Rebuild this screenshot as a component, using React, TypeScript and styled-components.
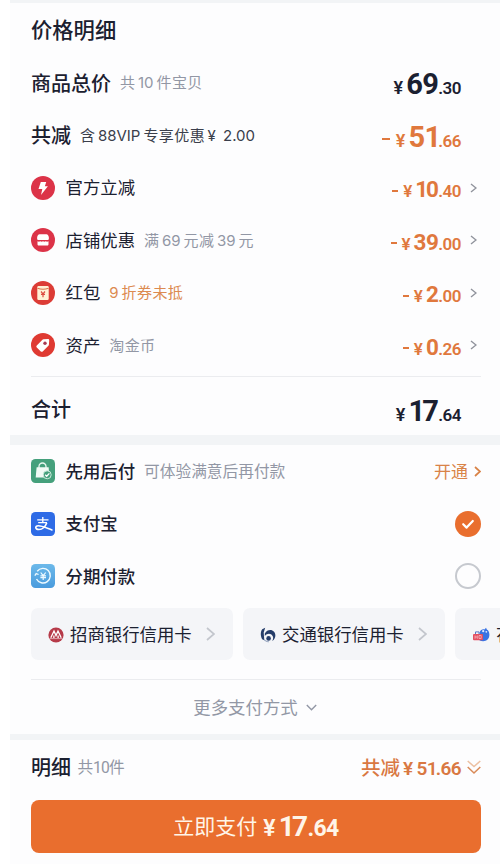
import React from 'react';
import styled, { createGlobalStyle } from 'styled-components';

const Global = createGlobalStyle`
  * { box-sizing: border-box; }
  body { margin: 0; background: #fff; overflow: hidden; }
`;

const INK = '#1b2030';
const GREY = '#9297a5';
const ORANGE = '#e0783d';

const Page = styled.main`
  width: 490px;
  height: 864px;
  margin-left: 10px;
  overflow: hidden;
  background: #fdfdfe;
  display: flex;
  flex-direction: column;
  font-family: Roboto, 'Noto Sans CJK SC', sans-serif;
  color: ${INK};
  white-space: nowrap;
`;

const Band = styled.div<{ $h: number }>`
  flex: none;
  height: ${(p) => p.$h}px;
  background: #f2f4f6;
`;

const Section = styled.section<{ $h: number }>`
  flex: none;
  height: ${(p) => p.$h}px;
  padding: 0 19px 0 21px;
  display: flex;
  flex-direction: column;
`;

const Row = styled.div<{ $h?: number }>`
  flex: none;
  height: ${(p) => p.$h ?? 52.5}px;
  display: flex;
  align-items: center;
`;

const Divider = styled.div<{ $top: number }>`
  flex: none;
  height: 1px;
  margin-top: ${(p) => p.$top}px;
  background: #ebecef;
`;

const Label = styled.span<{ $size: number; $weight?: number; $lift?: number }>`
  font-family: 'Noto Sans CJK SC', sans-serif;
  font-size: ${(p) => p.$size}px;
  font-weight: ${(p) => p.$weight ?? 500};
  line-height: 1;
  padding-bottom: ${(p) => p.$lift ?? 2}px;
`;

const NoteText = styled.span<{ $color?: string; $size?: number; $ls?: number; $gap?: number }>`
  font-family: 'Noto Sans CJK SC', sans-serif;
  font-size: ${(p) => p.$size ?? 15}px;
  letter-spacing: ${(p) => p.$ls ?? 0.4}px;
  line-height: 1;
  margin-left: ${(p) => p.$gap ?? 9}px;
  padding-bottom: 1px;
  color: ${(p) => p.$color ?? GREY};
`;

const Latin = styled.span<{ $tight?: boolean; $first?: boolean }>`
  font-family: ${(p) => (p.$tight ? 'Roboto' : 'Inter')}, sans-serif;
  letter-spacing: ${(p) => (p.$tight ? '-0.8px' : '0')};
  word-spacing: 3px;
  margin: 0 ${(p) => (p.$tight ? 0 : 3)}px 0 ${(p) => (p.$tight || p.$first ? 0 : 2.5)}px;
`;

const IconSlot = styled.span`
  flex: none;
  width: 34.5px;
  height: 24px;
  svg { display: block; }
`;

const Money = styled.span<{ $big?: boolean; $color: string }>`
  margin-left: auto;
  display: flex;
  align-items: baseline;
  font-weight: 700;
  line-height: 1;
  color: ${(p) => p.$color};
  padding-top: ${(p) => (p.$big ? 4 : 3)}px;
`;

const Minus = styled.span<{ $big?: boolean }>`
  width: ${(p) => (p.$big ? 8 : 6)}px;
  height: ${(p) => (p.$big ? 2.5 : 2)}px;
  background: currentColor;
  align-self: center;
  margin: ${(p) => (p.$big ? '3px 6px 0 0' : '3px 5px 0 0')};
`;

const Yen = styled.span<{ $size: number }>`
  font-size: ${(p) => p.$size}px;
  font-weight: 600;
  margin-right: 3px;
`;

const Whole = styled.span<{ $size: number }>`
  font-size: ${(p) => p.$size}px;
  letter-spacing: -0.6px;
`;

const SlimOne = styled.span`
  letter-spacing: -0.1em;
`;

const Cents = styled.span`
  font-size: 17px;
  letter-spacing: -0.5px;
  font-weight: 600;
`;

const Arrow = styled.span`
  width: 20px;
  display: flex;
  justify-content: flex-end;
  padding-right: 4px;
`;

function Note({ text, tight, ...rest }: { text: string; tight?: boolean; $color?: string; $size?: number; $ls?: number; $gap?: number }) {
  return (
    <NoteText {...rest}>
      {text
        .split(/(¥ [0-9.]+|[0-9A-Z.]+)/)
        .filter(Boolean)
        .map((part, i) =>
          /^[¥0-9A-Z]/.test(part) ? <Latin key={i} $tight={tight} $first={i === 0}>{part}</Latin> : part,
        )}
    </NoteText>
  );
}

function Digits({ value, size }: { value: string; size: number }) {
  return (
    <Whole $size={size}>
      {value.split('').map((d, i) => (d === '1' ? <SlimOne key={i}>1</SlimOne> : d))}
    </Whole>
  );
}

function Amount({ value, big, minus, color = ORANGE }: { value: string; big?: boolean; minus?: boolean; color?: string }) {
  const [whole, cents] = value.split('.');
  return (
    <Money $big={big} $color={color}>
      {minus && <Minus $big={big} />}
      <Yen $size={big ? 18 : 17}>¥</Yen>
      <Digits value={whole} size={big ? 29 : 22.5} />
      <Cents>.{cents}</Cents>
    </Money>
  );
}

function Chevron({ w, h, color, stroke = 1.4 }: { w: number; h: number; color: string; stroke?: number }) {
  return (
    <svg width={w} height={h} viewBox={`0 0 ${w} ${h}`} fill="none" stroke={color} strokeWidth={stroke}>
      <path d={`M1 1 L${w - 1} ${h / 2} L1 ${h - 1}`} />
    </svg>
  );
}

const BoltIcon = () => (
  <svg width="24" height="24" viewBox="0 0 24 24">
    <circle cx="12" cy="12" r="12" fill="#dc3348" />
    <path d="M9.8 6h5.400l-1.300 4.200h3L10 19l1.300-6H7.500z" fill="#fff" />
  </svg>
);

const ShopIcon = () => (
  <svg width="24" height="24" viewBox="0 0 24 24">
    <circle cx="12" cy="12" r="12" fill="#dc3348" />
    <path d="M8.500 6.300h7c1.200 0 2.200 1.500 2.400 3.400.1 1.400-.4 2.400-1.200 2.400H7.300c-.8 0-1.300-1-1.200-2.400.2-1.900 1.200-3.400 2.400-3.400z" fill="#fff" />
    <path d="M6.500 13.200q1.400.9 2.800 0 1.350.9 2.700 0 1.350.9 2.700 0 1.400.9 2.800 0v3c0 .9-.5 1.400-1.300 1.400H7.800c-.8 0-1.300-.5-1.300-1.400z" fill="#fff" />
  </svg>
);

const PacketIcon = () => (
  <svg width="24" height="24" viewBox="0 0 24 24">
    <circle cx="12" cy="12" r="12" fill="#dc3c36" />
    <rect x="6.300" y="5" width="11.400" height="14" rx="1.200" fill="#fff1d6" />
    <path d="M6.500 7.200q5.500 2 11 0" fill="none" stroke="#d9754c" strokeWidth="1.100" />
    <path d="M10 10.500l2 2.300 2-2.300M10 13.300h4M12 12.800V16.200" fill="none" stroke="#dc4c40" strokeWidth="1.200" />
  </svg>
);

const TagIcon = () => (
  <svg width="24" height="24" viewBox="0 0 24 24">
    <circle cx="12" cy="12" r="12" fill="#df3a32" />
    <path d="M12.400 6.200l4.400-.2c.9 0 1.400.5 1.400 1.400l-.3 4.300c0 .4-.2.700-.5 1l-5.700 5.700c-.6.600-1.300.600-1.900 0L5.800 14.400c-.6-.6-.6-1.300 0-1.900l5.600-5.800c.3-.3.600-.5 1-.5z" fill="#fff" />
    <circle cx="14" cy="10.200" r="1.700" fill="#a83a52" />
  </svg>
);

const BagIcon = () => (
  <svg width="24" height="24" viewBox="0 0 24 24">
    <rect width="24" height="24" rx="4.500" fill="#45a07c" />
    <path d="M8 9V7.500a3.500 3.500 0 0 1 7 0V9" fill="none" stroke="#e8f6ef" strokeWidth="1.300" />
    <path d="M5.600 8.200h12l.9 10.300H4.700z" fill="#f1faf5" />
    <circle cx="16.200" cy="15.800" r="4" fill="#45a07c" stroke="#d9f0e5" strokeWidth=".9" />
    <path d="M14.200 15.800l1.500 1.500 2.700-2.900" fill="none" stroke="#fff" strokeWidth="1.300" />
  </svg>
);

const AlipayIcon = () => (
  <svg width="24" height="24" viewBox="0 0 24 24" fill="none" stroke="#fff">
    <rect width="24" height="24" rx="4.500" fill="#2e6be6" stroke="none" />
    <path d="M6.200 7.800h11.300M11.800 5v5.500M7.200 10.700h8.800" strokeWidth="1.300" />
    <path d="M15.800 10.700c-1.500 4-4.700 6.800-7.900 6.800-3.900 0-4.200-3.700-.7-3.700 4.400 0 8.400 2.400 14.300 4.400" strokeWidth="1.600" />
  </svg>
);

const InstallmentIcon = () => (
  <svg width="24" height="24" viewBox="0 0 24 24" fill="none" stroke="#eefaff">
    <defs>
      <linearGradient id="sky" x1="0" y1="0" x2="0" y2="1">
        <stop offset="0" stopColor="#6cb9ea" />
        <stop offset="1" stopColor="#4a9bdd" />
      </linearGradient>
    </defs>
    <rect width="24" height="24" rx="4.500" fill="url(#sky)" stroke="none" />
    <path d="M6.200 7.200A7.300 7.300 0 1 1 5.500 15" strokeWidth="1.400" />
    <path d="M3.800 11.600L5.200 9.600l2.400.9" strokeWidth="1.300" />
    <path d="M9.700 8.500l2.500 3.200 2.500-3.200M9.400 11.900h5.600M9.400 13.700h5.600M12.200 11.700v4.300" strokeWidth="1.200" />
  </svg>
);

const CmbIcon = () => (
  <svg width="16" height="16" viewBox="0 0 16 16">
    <circle cx="8" cy="8" r="7.600" fill="#b63a49" />
    <path d="M2.800 10.800L6 4l2 4.600L10 4l3.200 6.800M5.900 11V8.400M10.100 11V8.400" fill="none" stroke="#fff" strokeWidth="1.300" />
    <path d="M1.500 11.600h13" stroke="#e9bcc2" strokeWidth=".8" />
  </svg>
);

const BocomIcon = () => (
  <svg width="16" height="16" viewBox="0 0 16 16">
    <path d="M5.200.8L3.700 5.500 4.300 13.300 2.500 12.600C.300 9.500.300 4.500 2.200 2.200z" fill="#263d69" />
    <path d="M4.800 6.500C7 2.600 11.500 2 14 4.700c2.300 2.600 1.700 7.300-1.800 9.200.9-1.300 1.400-3.200.4-5-1.600-2.700-5.400-2.900-7.800.1z" fill="#263d69" />
    <circle cx="8.600" cy="11.400" r="2.300" fill="#263d69" />
    <path d="M3.800 12.500c1.300 1.300 3 2.200 5 2.300" stroke="#6f84a8" strokeWidth=".8" fill="none" />
  </svg>
);

const HuabeiIcon = () => (
  <svg width="18" height="16" viewBox="0 0 18 16">
    <path d="M7.500 5.500C8.500 2.500 11 2 12.500 2.500L14 .8l.8 1.800C18 4.200 18.200 10 15.600 12.600c-2 2-5.500 2-8 .9z" fill="#3973e3" />
    <circle cx="11.200" cy="4.200" r="1.100" fill="#dfeafd" />
    <circle cx="14.300" cy="4.800" r=".9" fill="#dfeafd" />
    <path d="M3.500 7V4.900H7V7" fill="none" stroke="#5c78c5" strokeWidth="1" />
    <rect x="1" y="7" width="10" height="6.200" rx="1" fill="#e34e60" />
    <path d="M3 8.500v3.300M3 10h2M5.300 8.500v3.300M7 8.500v3h2.200v-3z" stroke="#fbd5da" strokeWidth=".6" fill="none" />
  </svg>
);

const OpenLink = styled.span`
  margin-left: auto;
  display: flex;
  align-items: center;
  gap: 6px;
  color: #d98347;
`;

const RadioSlot = styled.span`
  margin-left: auto;
  svg { display: block; }
`;

const Cards = styled.div`
  flex: none;
  display: flex;
  gap: 10.5px;
  height: 52px;
  margin: 5px -19px 0 0;
  overflow: hidden;
`;

const Card = styled.div`
  flex: none;
  width: 201.5px;
  height: 52px;
  border-radius: 7px;
  background: #f4f5f8;
  display: flex;
  align-items: center;
  padding: 2px 18px 0 17px;
  gap: 6px;
  > svg:last-child { margin-left: auto; margin-top: -1px; }
`;

const More = styled.div`
  flex: 1;
  display: flex;
  align-items: center;
  justify-content: center;
  gap: 8px;
  color: ${GREY};
  padding: 2px 2px 0 0;
`;

const Saved = styled.span`
  margin-left: auto;
  display: flex;
  align-items: center;
  color: #d97842;
`;

const SavedNumber = styled.span`
  font-size: 19px;
  font-weight: 600;
  letter-spacing: -0.6px;
  line-height: 1;
  margin: 1px 6px 0 3px;
  span:first-child { margin-right: 4px; }
`;

const PayButton = styled.button`
  flex: none;
  height: 52.5px;
  margin-top: 5px;
  border: 0;
  border-radius: 8px;
  background: #e96e2e;
  color: #fff5e8;
  font-family: inherit;
  display: flex;
  align-items: center;
  justify-content: center;
  padding: 2px 0 0;
`;

const ButtonMoney = styled.span`
  display: flex;
  align-items: baseline;
  font-weight: 700;
  line-height: 1;
  margin-left: 6px;
`;

const deductions = [
  { icon: <BoltIcon />, name: '官方立减', note: '', amount: '10.40' },
  { icon: <ShopIcon />, name: '店铺优惠', note: '满69元减39元', amount: '39.00' },
  { icon: <PacketIcon />, name: '红包', note: '9折券未抵', amount: '2.00', highlight: true },
  { icon: <TagIcon />, name: '资产', note: '淘金币', amount: '0.26' },
];

const cards = [
  { icon: <CmbIcon />, name: '招商银行信用卡' },
  { icon: <BocomIcon />, name: '交通银行信用卡' },
  { icon: <HuabeiIcon />, name: '花呗' },
];

export default function App() {
  return (
    <>
      <Global />
      <Page>
        <Band $h={3} />
        <Section $h={432}>
          <Row $h={53.5}><Label $size={21.3}>价格明细</Label></Row>
          <Row>
            <Label $size={20} $lift={0}>商品总价</Label>
            <Note text="共10件宝贝" />
            <Amount value="69.30" big color={INK} />
            <Arrow />
          </Row>
          <Row>
            <Label $size={20} $lift={0}>共减</Label>
            <Note text="含88VIP专享优惠¥ 2.00" $color="#3a3e4b" />
            <Amount value="51.66" big minus />
            <Arrow />
          </Row>
          {deductions.map((d) => (
            <Row key={d.name}>
              <IconSlot>{d.icon}</IconSlot>
              <Label $size={17.4} $weight={400}>{d.name}</Label>
              {d.note && <Note text={d.note} $color={d.highlight ? '#dc8a50' : undefined} />}
              <Amount value={d.amount} minus />
              <Arrow><Chevron w={7} h={10} color="#90939c" /></Arrow>
            </Row>
          ))}
          <Divider $top={4.5} />
          <Row $h={64}>
            <Label $size={20} $lift={0}>合计</Label>
            <Amount value="17.64" big color={INK} />
            <Arrow />
          </Row>
        </Section>
        <Band $h={10} />
        <Section $h={289}>
          <Row>
            <IconSlot><BagIcon /></IconSlot>
            <Label $size={17.4}>先用后付</Label>
            <Note text="可体验满意后再付款" $size={15.7} $ls={0} />
            <OpenLink>
              <Label $size={17} $weight={400}>开通</Label>
              <Chevron w={7} h={11} color="#d98347" stroke={1.7} />
            </OpenLink>
          </Row>
          <Row>
            <IconSlot><AlipayIcon /></IconSlot>
            <Label $size={17.4}>支付宝</Label>
            <RadioSlot>
              <svg width="26" height="26" viewBox="0 0 26 26">
                <circle cx="13" cy="13" r="13" fill="#e96e2e" />
                <path d="M8.200 13.200l3.400 3.400 6.200-6.600" fill="none" stroke="#fff" strokeWidth="2.200" strokeLinecap="round" strokeLinejoin="round" />
              </svg>
            </RadioSlot>
          </Row>
          <Row>
            <IconSlot><InstallmentIcon /></IconSlot>
            <Label $size={17.4}>分期付款</Label>
            <RadioSlot>
              <svg width="26" height="26" viewBox="0 0 26 26">
                <circle cx="13" cy="13" r="12" fill="none" stroke="#c6c9cf" strokeWidth="2" />
              </svg>
            </RadioSlot>
          </Row>
          <Cards>
            {cards.map((c) => (
              <Card key={c.name}>
                {c.icon}
                <Label $size={17.4} $weight={400}>{c.name}</Label>
                <Chevron w={9} h={14} color="#c3c6cd" stroke={1.7} />
              </Card>
            ))}
          </Cards>
          <Divider $top={19} />
          <More>
            <Label $size={17.4} $weight={400}>更多支付方式</Label>
            <svg width="11" height="7" viewBox="0 0 11 7" fill="none" stroke="#9297a5" strokeWidth="1.4">
              <path d="M.8 1l4.700 4.700L10.200 1" />
            </svg>
          </More>
        </Section>
        <Band $h={6} />
        <Section $h={124}>
          <Row $h={55}>
            <Label $size={20} $lift={1}>明细</Label>
            <Note text="共10件" tight $size={15.7} $ls={-0.2} $gap={6.5} />
            <Saved>
              <Label $size={19.5} $lift={1}>共减</Label>
              <SavedNumber><span>¥</span>5<SlimOne>1</SlimOne>.66</SavedNumber>
              <svg width="14" height="15" viewBox="0 0 14 15" fill="none" strokeWidth="1.5">
                <path d="M.7 1l6.300 5.500L13.300 1" stroke="#ecc0a2" />
                <path d="M.7 7l6.300 6L13.300 7" stroke="#d98a58" />
              </svg>
            </Saved>
          </Row>
          <PayButton>
            <Label $size={21} $weight={400} $lift={3}>立即支付</Label>
            <ButtonMoney>
              <Yen $size={23}>¥</Yen>
              <Digits value="17" size={28} />
              <Whole $size={23}>.64</Whole>
            </ButtonMoney>
          </PayButton>
        </Section>
      </Page>
    </>
  );
}
